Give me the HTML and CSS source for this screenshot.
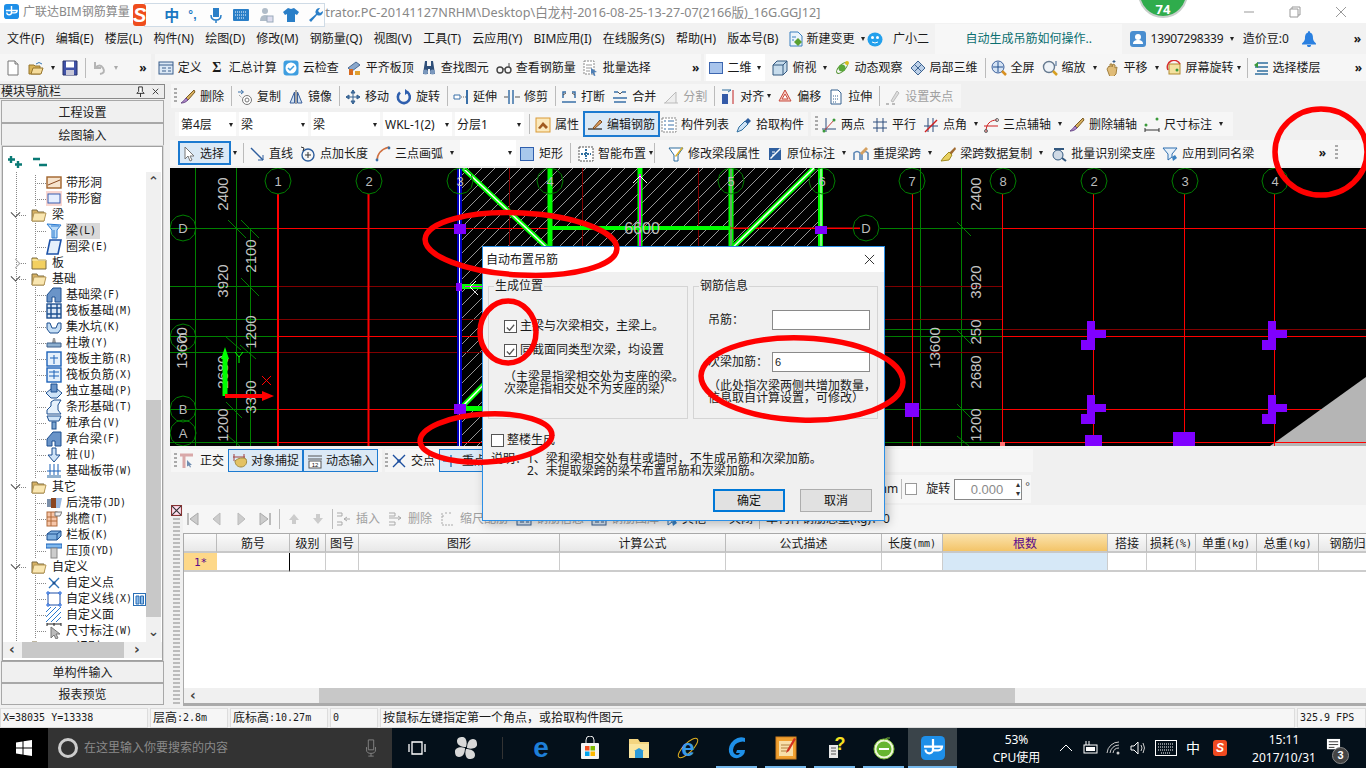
FILE: index.html
```html
<!DOCTYPE html>
<html lang="zh">
<head>
<meta charset="utf-8">
<title>广联达BIM钢筋算量</title>
<link rel="stylesheet" href="styles.css">
</head>
<body>
<svg class="defs" aria-hidden="true">
<defs>
<symbol id="doc" viewBox="0 0 16 16"><path d="M3 1h7l3 3v11H3z" fill="#fff" stroke="#777"/><path d="M10 1v3h3" fill="#ddd" stroke="#777"/></symbol>
<symbol id="open" viewBox="0 0 16 16"><path d="M1 5h5l1 1h5v8H1z" fill="#d9b45a" stroke="#96742a"/><path d="M3 14l2-6h10l-2 6z" fill="#f5dc9c" stroke="#96742a"/><path d="M8 4q3-3 6 0" stroke="#3577b5" fill="none"/></symbol>
<symbol id="save" viewBox="0 0 16 16"><path d="M1 1h14v14H1z" fill="#4052a8" stroke="#27306a"/><rect x="4" y="1.500" width="8" height="6" fill="#fff"/><rect x="4" y="10" width="8" height="5" fill="#c8c8d8"/></symbol>
<symbol id="undo" viewBox="0 0 16 16"><path d="M4 2v6h6M4 8q5-5 8 0t-3 6" fill="none" stroke="#b5b5b5" stroke-width="2"/></symbol>
<symbol id="def" viewBox="0 0 16 16"><rect x="1" y="2" width="14" height="12" fill="#dbe8f5" stroke="#3a5f8c"/><path d="M1 5h14M4 8h4M4 11h4M10 8h3M10 11h3" stroke="#3a5f8c"/></symbol>
<symbol id="cloud" viewBox="0 0 16 16"><rect x=".5" y=".5" width="15" height="15" rx="3" fill="#3e9ee0"/><circle cx="8" cy="8" r="5.500" fill="#fff"/><path d="M5 8l2 2 4-4" fill="none" stroke="#3e9ee0" stroke-width="1.500"/></symbol>
<symbol id="flat" viewBox="0 0 16 16"><path d="M2 8L10 2l4 3-8 6z" fill="#8aa8cc" stroke="#4a6a94"/><rect x="3" y="9" width="4" height="6" fill="#d86a1f"/><rect x="9" y="11" width="5" height="4" fill="#e0a030"/></symbol>
<symbol id="binoc" viewBox="0 0 16 16"><path d="M4 1h2v5h4V1h2l2 13H9V9H7v5H2z" fill="#30507a"/><circle cx="4.500" cy="12" r="2.500" fill="#7b98bd"/><circle cx="11.500" cy="12" r="2.500" fill="#7b98bd"/></symbol>
<symbol id="glass" viewBox="0 0 16 16"><circle cx="4" cy="10" r="3" fill="none" stroke="#444" stroke-width="1.400"/><circle cx="12" cy="10" r="3" fill="none" stroke="#444" stroke-width="1.400"/><path d="M7 9h2M13 7V3" stroke="#444"/></symbol>
<symbol id="batch" viewBox="0 0 16 16"><rect x="1" y="1" width="10" height="13" fill="#fff" stroke="#888" stroke-dasharray="2 1"/><path d="M3 5h6M3 8h6M3 11h4" stroke="#999"/><path d="M8 8l6 4-3 .5 1.500 3-1.500.5-1.500-3L8 14z" fill="#4f7fb5"/></symbol>
<symbol id="sq2d" viewBox="0 0 16 16"><rect x="1.500" y="2.500" width="13" height="11" fill="#a8c4ec" stroke="#3c66b0"/></symbol>
<symbol id="cube" viewBox="0 0 16 16"><path d="M1 5l4-4h10v10l-4 4H1z" fill="#c7dcec" stroke="#33587f"/><path d="M1 5h10v10M11 5l4-4" fill="none" stroke="#33587f"/></symbol>
<symbol id="orbit" viewBox="0 0 16 16"><ellipse cx="8" cy="8" rx="7" ry="3" transform="rotate(-45 8 8)" fill="none" stroke="#4f8f2f"/><circle cx="8" cy="8" r="3.500" fill="#5aa83a"/><circle cx="13" cy="3" r="2" fill="#d8c020"/></symbol>
<symbol id="part3d" viewBox="0 0 16 16"><path d="M1 8l7-7 7 7-7 7z" fill="#bcd0e8" stroke="#3d6391"/><path d="M4.500 4.500l7 7M11.500 4.500l-7 7" stroke="#3d6391"/></symbol>
<symbol id="zfull" viewBox="0 0 16 16"><circle cx="7" cy="7" r="6" fill="#d5e3f4" stroke="#3a5f9b"/><path d="M7 2v10M2 7h10" stroke="#23508f"/><path d="M11 11l4 4" stroke="#d89020" stroke-width="2.500"/></symbol>
<symbol id="zoomq" viewBox="0 0 16 16"><circle cx="7" cy="7" r="5.500" fill="#eef3f8" stroke="#667a90" stroke-width="1.400"/><path d="M11 11l4 4" stroke="#d8a020" stroke-width="2.500"/><path d="M14 1v5" stroke="#39608f"/></symbol>
<symbol id="hand" viewBox="0 0 16 16"><path d="M3 9l2-3 1 1V4l2 0v3l1-3 2 1v3l2-1-1 7-3 3H6z" fill="#e0bc78" stroke="#a28040"/><path d="M10 0v3M8.500 1.500h3" stroke="#3a5f8c"/></symbol>
<symbol id="rot" viewBox="0 0 16 16"><rect x="3" y="4" width="11" height="10" fill="#f4e2a0" stroke="#b08a30"/><path d="M2 10A6.500 6.500 0 0 1 14 4" fill="none" stroke="#d83030" stroke-width="1.500"/><circle cx="11" cy="10" r="1.500" fill="#3a9a3a"/></symbol>
<symbol id="floors" viewBox="0 0 16 16"><path d="M4 3h11M2 7h13M4 11h11M2 14h13" stroke="#2f6f9f" stroke-width="1.500"/><path d="M1 5l4-3v6z" fill="#3a9a3a"/></symbol>
<symbol id="erase" viewBox="0 0 16 16"><path d="M14 1L6 9l2 2 7-8z" fill="#d8b060" stroke="#7a5a20"/><path d="M1 14c2-1 3-3 5-5l2 2c-2 2-4 3-7 3z" fill="#b088c8" stroke="#6a4a8a"/></symbol>
<symbol id="copy" viewBox="0 0 16 16"><circle cx="10" cy="11" r="4.500" fill="#fff" stroke="#777"/><circle cx="10" cy="11" r="2" fill="none" stroke="#777"/><path d="M1 3h5M4 1l2.500 2L4 5" fill="none" stroke="#3a70a8"/><path d="M2 6l3 3" stroke="#888" stroke-dasharray="1 1"/></symbol>
<symbol id="mirror" viewBox="0 0 16 16"><path d="M8 1v14" stroke="#555"/><path d="M6.500 3v11H2zM9.500 3v11H14z" fill="#d3e3f3" stroke="#3a5f9b"/></symbol>
<symbol id="move" viewBox="0 0 16 16"><path d="M8 1v14M1 8h14M8 1l-2 3h4zM8 15l-2-3h4zM1 8l3-2v4zM15 8l-3-2v4z" fill="#5a86b8" stroke="#34608f"/></symbol>
<symbol id="rotate" viewBox="0 0 16 16"><path d="M4 3.500A6 6 0 1 0 11 3" fill="none" stroke="#2f5fae" stroke-width="2.600"/><path d="M9 0l4 3-4 3z" fill="#2f5fae"/></symbol>
<symbol id="extend" viewBox="0 0 16 16"><path d="M14 1v14" stroke="#3a70a8" stroke-width="2"/><path d="M1 6h6v4H1z" fill="#fff" stroke="#3a70a8"/><path d="M8 8h5" stroke="#666" stroke-dasharray="1 1"/></symbol>
<symbol id="trim" viewBox="0 0 16 16"><path d="M5 1v14M9 1v14" stroke="#3a70a8" stroke-width="1.500"/><path d="M0 8h4M11 8h5" stroke="#555"/></symbol>
<symbol id="brk" viewBox="0 0 16 16"><path d="M2 9V3h3M14 9V3h-3M1 13h14" stroke="#3a70a8" fill="none" stroke-width="1.500"/><path d="M2 6l3-2M11 4l3 2" stroke="#555"/></symbol>
<symbol id="merge" viewBox="0 0 16 16"><path d="M2 3h4M10 3h4M2 13h12M1 9h14" stroke="#3a70a8" stroke-width="1.400"/><path d="M6 3l2 2M10 3L8 5" stroke="#555"/></symbol>
<symbol id="split" viewBox="0 0 16 16"><path d="M1 14h14M2 14L13 3v11" fill="#eee" stroke="#bbb"/></symbol>
<symbol id="align" viewBox="0 0 16 16"><rect x="2" y="5" width="6" height="10" fill="#345aa8"/><path d="M13 1v14" stroke="#c02020"/><path d="M2 1h9M8 3l3-2" stroke="#2f6f9f"/></symbol>
<symbol id="offset" viewBox="0 0 16 16"><path d="M8 1l6 11H2z" fill="#f6cfc8" stroke="#c8483a"/><path d="M8 5l3 5H5z" fill="#fff" stroke="#c8483a"/></symbol>
<symbol id="stretch" viewBox="0 0 16 16"><path d="M3 1h7l3 3v11H3z" fill="#fff" stroke="#34608f"/><path d="M5 7h6M5 10h6M5 13h4" stroke="#34608f" stroke-dasharray="1 1"/></symbol>
<symbol id="clip" viewBox="0 0 16 16"><path d="M6 12l6-10 2 2-6 9z" fill="#ddd" stroke="#bbb"/><path d="M1 15h3M7 15h3" stroke="#bbb" stroke-width="2"/></symbol>
<symbol id="attr" viewBox="0 0 16 16"><rect x="1" y="1" width="14" height="14" fill="#fbe9bd" stroke="#d99a36"/><path d="M3 11l5-6 5 5-2 2-3-3-3 3z" fill="#a05a20"/></symbol>
<symbol id="edit" viewBox="0 0 16 16"><path d="M1 12h14" stroke="#444" stroke-width="1.500"/><path d="M6 11l7-8 2 2-8 7z" fill="#e0a060" stroke="#7a4a20"/></symbol>
<symbol id="list" viewBox="0 0 16 16"><rect x="1" y="1" width="14" height="14" fill="#fff" stroke="#888" stroke-dasharray="2 1"/><path d="M3 4h2M7 4h6M3 8h2M7 8h6M3 12h2M7 12h6" stroke="#3a70a8"/></symbol>
<symbol id="pick" viewBox="0 0 16 16"><path d="M1 15l2-5 6-6 3 3-6 6z" fill="#cfe2f5" stroke="#2f6f9f"/><path d="M9 4l3-3 3 3-3 3z" fill="#2f5f9f"/></symbol>
<symbol id="twopt" viewBox="0 0 16 16"><path d="M5 1v14M1 12h14" stroke="#2d4d7d"/><path d="M3 14L14 2" stroke="#c04040"/><circle cx="13" cy="3" r="1.500" fill="#3a9a3a"/><circle cx="3" cy="14" r="1.500" fill="#3a9a3a"/></symbol>
<symbol id="para" viewBox="0 0 16 16"><path d="M5 1v14M11 1v14M1 5h14M1 11h14" stroke="#2d4d7d"/></symbol>
<symbol id="angle" viewBox="0 0 16 16"><path d="M5 1v14M10 1v14M1 9h14" stroke="#2d4d7d"/><path d="M2 15L14 3" stroke="#d02020" stroke-width="1.400"/></symbol>
<symbol id="arc3" viewBox="0 0 16 16"><path d="M3 15C3 7 7 3 14 3" fill="none" stroke="#d02020"/><circle cx="3" cy="14" r="1.500" fill="none" stroke="#666"/><circle cx="14" cy="3" r="1.500" fill="none" stroke="#666"/><path d="M1 9h14" stroke="#d02020"/></symbol>
<symbol id="dim" viewBox="0 0 16 16"><path d="M1 11v4M15 11v4M1 13h14" stroke="#333"/><circle cx="13" cy="2" r="1.500" fill="#3a9a3a"/><circle cx="2" cy="8" r="1.500" fill="#3a9a3a"/></symbol>
<symbol id="sel" viewBox="0 0 16 16"><path d="M5 1v12l3-3 2 5 2-1-2-4h4z" fill="#fff" stroke="#777"/></symbol>
<symbol id="line" viewBox="0 0 16 16"><path d="M2 2l12 12" stroke="#2d5d9d" stroke-width="1.500"/><path d="M14 9v5H9" fill="none" stroke="#2d5d9d"/></symbol>
<symbol id="ptlen" viewBox="0 0 16 16"><circle cx="8" cy="9" r="6" fill="none" stroke="#2d5d9d" stroke-width="1.400"/><path d="M8 6v6M5 9h6" stroke="#333"/><path d="M1 1l3 1-1 3" fill="none" stroke="#333"/></symbol>
<symbol id="arc" viewBox="0 0 16 16"><path d="M2 15C2 8 7 3 14 1" fill="none" stroke="#d07040" stroke-width="1.500"/><circle cx="2" cy="14" r="1.400" fill="#3a70a8"/><circle cx="14" cy="2" r="1.400" fill="#3a70a8"/></symbol>
<symbol id="rect" viewBox="0 0 16 16"><rect x="1.500" y="1.500" width="13" height="13" fill="#a8c8ec" stroke="#2f5fae"/></symbol>
<symbol id="smart" viewBox="0 0 16 16"><rect x="1" y="1" width="14" height="14" fill="#fff" stroke="#555" stroke-dasharray="2 1"/><path d="M8 3v10M3 8h10" stroke="#2f6f9f" stroke-width="2" stroke-dasharray="2 1"/></symbol>
<symbol id="funnel" viewBox="0 0 16 16"><path d="M1 2h14l-5 7v6H6V9z" fill="#fff" stroke="#2d6d9d"/><path d="M7 10l7-9 1 1-7 9z" fill="#e0b020"/></symbol>
<symbol id="mark" viewBox="0 0 16 16"><path d="M2 2h12v12H2z" fill="#2f5f9f"/><path d="M3 12L13 2l1 1L4 13z" fill="#fff"/><path d="M5 6h3M5 9h2" stroke="#fff"/></symbol>
<symbol id="lift" viewBox="0 0 16 16"><path d="M1 14V7q3-3 6 0v7M9 14V7q3-3 6 0v7" fill="none" stroke="#5b86b5" stroke-width="1.600"/><path d="M7 7l6-6 2 2-6 6z" fill="#d4a060"/></symbol>
<symbol id="broom" viewBox="0 0 16 16"><path d="M15 1L9 7l2 2 5-6z" fill="#a06a30"/><path d="M9 6l3 3-3 5-8 1 3-4z" fill="#e8d060" stroke="#a08a20"/></symbol>
<symbol id="batch2" viewBox="0 0 16 16"><circle cx="7" cy="9" r="5" fill="#cfd9e5" stroke="#33587f"/><path d="M3 2h10v2H3z" fill="#33587f"/><path d="M11 12l4 3" stroke="#33587f" stroke-width="2"/></symbol>
<symbol id="apply" viewBox="0 0 16 16"><path d="M1 2h14l-5 6v3l-4 3V8z" fill="#e5f0fa" stroke="#2f6faf"/><path d="M10 11l3-2 2 3-4 3z" fill="#3a80c0"/></symbol>
<symbol id="ortho" viewBox="0 0 16 16"><path d="M1 2h13M5 2v13" stroke="#d9a8a8" stroke-width="3"/><path d="M8 7l5 5-2 0 1 2-1 .5-1-2-2 1z" fill="#6f8db0"/></symbol>
<symbol id="snap" viewBox="0 0 16 16"><path d="M2 1v7M12 1v7M1 4h12" stroke="#a04040"/><path d="M3 8c3-3 8-4 11-2 2 4-1 8-5 8-4 0-6-3-6-6z" fill="#e3c265" stroke="#a08a40"/></symbol>
<symbol id="dyn" viewBox="0 0 16 16"><path d="M1 3h14M1 6h14" stroke="#555"/><rect x="2" y="8" width="12" height="7" fill="#fff" stroke="#555"/><text x="8" y="14" font-size="6" text-anchor="middle" font-family="Liberation Sans" fill="#111">12</text></symbol>
<symbol id="cross" viewBox="0 0 16 16"><path d="M2 2l12 12M14 2L2 14" stroke="#1d4f9f" stroke-width="1.400"/><rect x="6.500" y="6.500" width="3" height="3" fill="#1d4f9f"/></symbol>
<symbol id="mid" viewBox="0 0 16 16"><path d="M0 8h16M8 2v12" stroke="#3a80c0" stroke-width="1.600"/></symbol>
<symbol id="first" viewBox="0 0 16 16"><path d="M3 2v12" stroke="#bbb" stroke-width="2"/><path d="M13 2v12L5 8z" fill="#ccc" stroke="#aaa"/></symbol>
<symbol id="prev" viewBox="0 0 16 16"><path d="M11 2v12L4 8z" fill="#ccc" stroke="#bbb"/></symbol>
<symbol id="next" viewBox="0 0 16 16"><path d="M5 2v12l7-6z" fill="#ccc" stroke="#bbb"/></symbol>
<symbol id="last" viewBox="0 0 16 16"><path d="M13 2v12" stroke="#bbb" stroke-width="2"/><path d="M3 2v12l8-6z" fill="#ccc" stroke="#aaa"/></symbol>
<symbol id="up" viewBox="0 0 16 16"><path d="M8 3l5 6H10v4H6V9H3z" fill="#ccc"/></symbol>
<symbol id="down" viewBox="0 0 16 16"><path d="M8 13l5-6H10V3H6v4H3z" fill="#ccc"/></symbol>
<symbol id="ins" viewBox="0 0 16 16"><path d="M1 2h5v3H1M1 11h5v3H1M8 8h6M8 8l3-2M8 8l3 2" fill="none" stroke="#aaa"/></symbol>
<symbol id="del" viewBox="0 0 16 16"><path d="M1 2h6v3H1M1 11h6v3H1M1 7h12M10 5l3 2-3 2" fill="none" stroke="#aaa"/></symbol>
<symbol id="scale" viewBox="0 0 16 16"><path d="M2 2v12h12M2 5h2M5 2h2M9 2h3" fill="none" stroke="#aaa" stroke-dasharray="2 1"/></symbol>
<symbol id="fopen" viewBox="0 0 16 16"><path d="M1 3h5l1 2h6v9H1z" fill="#d7b163" stroke="#7a6a40"/><path d="M3 6h12l-2 8H1z" fill="#f9e6b0" stroke="#b49656"/></symbol>
<symbol id="fclose" viewBox="0 0 16 16"><path d="M1 3h5l1 2h8v9H1z" fill="#f3d060" stroke="#7a6a40"/><path d="M1 5h14" stroke="#fff3c0"/></symbol>
<symbol id="tHole" viewBox="0 0 16 16"><rect x="1" y="2" width="14" height="11" fill="#f6e3cd" stroke="#a0622a" stroke-width="1.400"/><path d="M2 10L14 5" stroke="#8a4a20"/></symbol>
<symbol id="tWin" viewBox="0 0 16 16"><rect x="0" y="0" width="16" height="15" fill="#f9d6d0"/><rect x="2" y="3" width="12" height="9" fill="#e5eeff" stroke="#3a5fb0"/></symbol>
<symbol id="tBeam" viewBox="0 0 16 16"><path d="M1 1l14 1-4 5v8H6V7z" fill="#bcdcf8" stroke="#2a7ad0"/><path d="M5 3l8 0M8 7v8" stroke="#2a7ad0"/></symbol>
<symbol id="tRing" viewBox="0 0 16 16"><path d="M4 1h11l-3 14H1z" fill="#e5f0fb" stroke="#1d52a8" stroke-width="1.600"/></symbol>
<symbol id="tFb" viewBox="0 0 16 16"><path d="M1 15V8l6-7h8v14H9v-5H6v5z" fill="#6a94c8" stroke="#1d4f8f"/></symbol>
<symbol id="tRaft" viewBox="0 0 16 16"><rect x="1" y="1" width="14" height="14" fill="#dbe8f6" stroke="#1d4f8f" stroke-width="1.400"/><path d="M1 5h14M1 11h14M5 1v14M11 1v14" stroke="#1d4f8f" stroke-width="1.400"/></symbol>
<symbol id="tPit" viewBox="0 0 16 16"><path d="M1 4h3l2 5h4l2-5h3v6l-3 4H4l-3-4z" fill="#c5def5" stroke="#1d4f8f"/></symbol>
<symbol id="tPier" viewBox="0 0 16 16"><path d="M7 3h2l1 5H6z" fill="#999"/><path d="M1 8h14v4H1z" fill="#8fb0cf" stroke="#3a5f8c"/></symbol>
<symbol id="tPm" viewBox="0 0 16 16"><rect x="1" y="1" width="14" height="14" fill="#e5f0fb" stroke="#1d62b8" stroke-width="1.400"/><path d="M8 4v9M4 7h8" stroke="#1d62b8"/></symbol>
<symbol id="tPn" viewBox="0 0 16 16"><rect x="1" y="1" width="14" height="14" fill="#e5f0fb" stroke="#1d62b8" stroke-width="1.400"/><path d="M8 3v9M3 9h10M3 5h10" stroke="#1d62b8"/></symbol>
<symbol id="tIso" viewBox="0 0 16 16"><path d="M0 10l5-4h6l5 4-5 5H5z" fill="#cfe3f7" stroke="#1d4f8f"/><path d="M5 1h6v8H5z" fill="#6a94c8" stroke="#1d4f8f"/></symbol>
<symbol id="tStrip" viewBox="0 0 16 16"><path d="M1 15v-4l4-4V3l3-2h7l-3 5v5l3 4z" fill="#e5f0fb" stroke="#1d4f8f"/></symbol>
<symbol id="tCap" viewBox="0 0 16 16"><path d="M1 1h14l-2 5H3z" fill="#cfe3f7" stroke="#1d4f8f"/><rect x="6" y="7" width="4" height="7" fill="#7ea6d0" stroke="#1d4f8f"/></symbol>
<symbol id="tPile" viewBox="0 0 16 16"><path d="M6 1h4v7h4l-6 7-6-7h4z" fill="#cfe3f7" stroke="#1d4f8f"/></symbol>
<symbol id="tBand" viewBox="0 0 16 16"><path d="M1 8h14M4 1v12M12 1v12M8 1v12" stroke="#1d62b8"/><path d="M1 12h14v3H1z" fill="#8fb0cf"/></symbol>
<symbol id="tPost" viewBox="0 0 16 16"><rect x="1" y="4" width="4" height="8" fill="#7a8ea8"/><rect x="5" y="3" width="5" height="10" fill="#8a4520"/><path d="M10 3h6l-2 10h-4z" fill="#9ab8e0"/></symbol>
<symbol id="tEave" viewBox="0 0 16 16"><rect x="1" y="1" width="10" height="14" fill="#f7c6a8" stroke="#b06a3a"/><path d="M1 6h10M1 10h10M5 1v14" stroke="#b06a3a"/><path d="M9 1h7l-2 4H9z" fill="#eee" stroke="#777"/></symbol>
<symbol id="tRail" viewBox="0 0 16 16"><path d="M1 7l4-3h10v5l-4 4H1z" fill="#7fb0e0" stroke="#1d4f8f"/><path d="M1 7h10v6M11 7l4-3" fill="none" stroke="#1d4f8f"/></symbol>
<symbol id="tPress" viewBox="0 0 16 16"><rect x="0" y="1" width="16" height="4" fill="#7fb8ee" stroke="#1d62b8"/><rect x="5" y="5" width="6" height="10" fill="#ccc" stroke="#888"/></symbol>
<symbol id="tCpt" viewBox="0 0 16 16"><path d="M3 3l10 10M13 3L3 13" stroke="#2a6fb5" stroke-width="1.400"/><circle cx="8" cy="8" r="1.500" fill="#1d4f8f"/></symbol>
<symbol id="tCln" viewBox="0 0 16 16"><rect x="2" y="2" width="12" height="12" fill="none" stroke="#1d4fa8"/><path d="M1 1h2v2H1zM13 1h2v2h-2zM1 13h2v2H1zM13 13h2v2h-2z" fill="#fff" stroke="#1d62d8"/></symbol>
<symbol id="tCfc" viewBox="0 0 16 16"><path d="M0 5L5 0M0 10L10 0M0 15L15 0M5 15L15 5M10 15l5-5" stroke="#2a7ad0"/></symbol>
<symbol id="tDim" viewBox="0 0 16 16"><path d="M1 1h14M1 0v3M8 0v3M15 0v3" stroke="#222"/><path d="M5 4v11l3-3 2 4 2-1-2-4h4z" fill="#bbb" stroke="#777"/></symbol>
<symbol id="cols" viewBox="0 0 13 13"><rect x=".5" y=".5" width="12" height="12" fill="#fff" stroke="#2a6fb5"/><path d="M3 3h3v8H3zM7.500 3h3v8h-3z" fill="#8ebcea" stroke="#2a6fb5"/></symbol>
<symbol id="user" viewBox="0 0 16 16"><rect width="16" height="16" rx="3" fill="#4a8ed0"/><circle cx="8" cy="6" r="3" fill="#fff"/><path d="M3 13c0-3 2-4 5-4s5 1 5 4z" fill="#fff"/></symbol>
<symbol id="bell" viewBox="0 0 16 16"><path d="M8 0c1 0 1 1 1 1.500 3 1 3 4 3 6s2 4 3 5v1H1v-1c1-1 3-3 3-5s0-5 3-6C7 1 7 0 8 0z" fill="#2a80e0"/><path d="M6 14h4c0 3-4 3-4 0z" fill="#2a80e0"/></symbol>
<symbol id="newc" viewBox="0 0 16 16"><path d="M2 1h8l4 4v10H2z" fill="#eaf3fb" stroke="#3a80c0"/><path d="M4 9h2M4 6h4" stroke="#3a80c0"/><path d="M10 7l4 4-4 4-4-4z" fill="#5aa030"/></symbol>
<symbol id="gxe" viewBox="0 0 16 16"><ellipse cx="8" cy="8.500" rx="7.500" ry="7" fill="#23a0ec"/><circle cx="5.500" cy="6.500" r="1.500" fill="#fff"/><circle cx="10.500" cy="6.500" r="1.500" fill="#fff"/><path d="M5 11q3 2 6 0" fill="none" stroke="#fff"/></symbol>
<symbol id="plusT" viewBox="0 0 16 16"><path d="M3 2v7M0 5.500h7M10 7v7M7 10.500h7" stroke="#0a7a75" stroke-width="2.400"/></symbol>
<symbol id="minusT" viewBox="0 0 16 16"><path d="M1 5h7M7 11h8" stroke="#0a7a75" stroke-width="2.400"/></symbol>
<symbol id="appIcon" viewBox="0 0 16 16"><rect width="16" height="16" rx="3" fill="#1e8fe8"/><path d="M8 2v7a2.500 2.500 0 0 1-5 0M2 7h6M8 7h6a2.500 2.500 0 0 1-2.500 2.500H8" fill="none" stroke="#fff" stroke-width="1.500"/></symbol>
<polygon id="oct" points="13,0 11.300,6.500 6.500,11.300 0,13 -6.500,11.300 -11.300,6.500 -13,0 -11.300,-6.500 -6.500,-11.300 0,-13 6.500,-11.300 11.300,-6.500" fill="none" stroke="#008000"/>
<g id="pf"><path d="M1087 321h8v9h11v8h-11v12h-14v-10h6z" fill="#7f00ff"/></g>
<pattern id="hatch" patternUnits="userSpaceOnUse" width="13" height="13"><path d="M0 13L13 0M-2 2L2 -2M11 15L15 11" stroke="#bdbdbd" stroke-width=".8"/></pattern>
</defs>
</svg>

<div class="app">
  <header class="title">
    <svg class="i appi"><use href="#appIcon"/></svg>
    <span class="t1">广联达BIM钢筋算量</span>
    <span class="t2">istrator.PC-20141127NRHM\Desktop\白龙村-2016-08-25-13-27-07(2166版)_16G.GGJ12]</span>
    <span class="winbtns">
      <svg class="wb" viewBox="0 0 12 12"><path d="M1 6h10" stroke="#999"/></svg>
      <svg class="wb" viewBox="0 0 12 12"><path d="M1 3h8v8H1zM3 3V1h8v8H9" fill="none" stroke="#999"/></svg>
      <svg class="wb" viewBox="0 0 12 12"><path d="M1 1l10 10M11 1L1 11" stroke="#999"/></svg>
    </span>
  </header>

  <nav class="menu">
    <span>文件(F)</span><span>编辑(E)</span><span>楼层(L)</span><span>构件(N)</span><span>绘图(D)</span><span>修改(M)</span><span>钢筋量(Q)</span><span>视图(V)</span><span>工具(T)</span><span>云应用(Y)</span><span>BIM应用(I)</span><span>在线服务(S)</span><span>帮助(H)</span><span>版本号(B)</span>
    <span class="it newc"><svg class="i"><use href="#newc"/></svg>新建变更</span><i class="c mc1"></i>
    <span class="it gxe"><svg class="i"><use href="#gxe"/></svg>广小二</span>
    <span class="ask">自动生成吊筋如何操作..</span>
    <span class="it acct"><svg class="i"><use href="#user"/></svg>13907298339</span><i class="c mc2"></i>
    <span class="zjd">造价豆:0</span>
    <svg class="i bell"><use href="#bell"/></svg>
    <b class="more end">»</b>
  </nav>

  <div class="bar r1">
    <div class="grp g1">
      <svg class="i"><use href="#doc"/></svg>
      <svg class="i"><use href="#open"/></svg><i class="c"></i>
      <svg class="i"><use href="#save"/></svg><i class="s"></i>
      <svg class="i"><use href="#undo"/></svg><i class="c lt"></i>
      <b class="more end">»</b>
    </div>
    <div class="grp g2">
      <span class="it"><svg class="i"><use href="#def"/></svg>定义</span>
      <span class="it sg"><b class="sig">Σ</b>汇总计算</span>
      <span class="it"><svg class="i"><use href="#cloud"/></svg>云检查</span>
      <span class="it"><svg class="i"><use href="#flat"/></svg>平齐板顶</span>
      <span class="it"><svg class="i"><use href="#binoc"/></svg>查找图元</span>
      <span class="it"><svg class="i"><use href="#glass"/></svg>查看钢筋量</span>
      <span class="it"><svg class="i"><use href="#batch"/></svg>批量选择</span>
      <b class="more end">»</b>
    </div>
    <div class="grp g3">
      <span class="whitebox"><span class="it"><svg class="i"><use href="#sq2d"/></svg>二维</span><i class="c"></i></span>
      <span class="it"><svg class="i"><use href="#cube"/></svg>俯视</span><i class="c"></i>
      <span class="it"><svg class="i"><use href="#orbit"/></svg>动态观察</span>
      <span class="it"><svg class="i"><use href="#part3d"/></svg>局部三维</span><i class="s"></i>
      <span class="it"><svg class="i"><use href="#zfull"/></svg>全屏</span>
      <span class="it"><svg class="i"><use href="#zoomq"/></svg>缩放</span><i class="c"></i>
      <span class="it"><svg class="i"><use href="#hand"/></svg>平移</span><i class="c"></i>
      <span class="it"><svg class="i"><use href="#rot"/></svg>屏幕旋转</span><i class="c n"></i><i class="s"></i>
      <span class="it"><svg class="i"><use href="#floors"/></svg>选择楼层</span>
      <b class="more end">»</b>
    </div>
  </div>

  <main class="main">
    <aside class="nav">
      <div class="navhead"><span>模块导航栏</span><span class="navtools"><svg class="pin" viewBox="0 0 10 12"><path d="M3 1h4v5l2 2H1l2-2zM5 8v4" fill="#fff" stroke="#222"/></svg><svg class="pin" viewBox="0 0 10 12"><path d="M2 3l6 6M8 3L2 9" stroke="#333"/></svg></span></div>
      <button class="navbtn">工程设置</button>
      <button class="navbtn">绘图输入</button>
      <div class="treebox">
        <div class="treetool"><svg class="i"><use href="#plusT"/></svg><svg class="i"><use href="#minusT"/></svg></div>
        <div class="treemid">
          <ul class="tree">
            <li class="leaf"><svg class="i"><use href="#tHole"/></svg>带形洞</li>
            <li class="leaf"><svg class="i"><use href="#tWin"/></svg>带形窗</li>
            <li class="fold"><i class="ch"></i><svg class="i"><use href="#fopen"/></svg>梁</li>
            <li class="leaf cur"><svg class="i"><use href="#tBeam"/></svg><span class="curt">梁<em>(L)</em></span></li>
            <li class="leaf"><svg class="i"><use href="#tRing"/></svg>圈梁<em>(E)</em></li>
            <li class="fold"><i class="ch rt"></i><svg class="i"><use href="#fclose"/></svg>板</li>
            <li class="fold"><i class="ch"></i><svg class="i"><use href="#fopen"/></svg>基础</li>
            <li class="leaf"><svg class="i"><use href="#tFb"/></svg>基础梁<em>(F)</em></li>
            <li class="leaf"><svg class="i"><use href="#tRaft"/></svg>筏板基础<em>(M)</em></li>
            <li class="leaf"><svg class="i"><use href="#tPit"/></svg>集水坑<em>(K)</em></li>
            <li class="leaf"><svg class="i"><use href="#tPier"/></svg>柱墩<em>(Y)</em></li>
            <li class="leaf"><svg class="i"><use href="#tPm"/></svg>筏板主筋<em>(R)</em></li>
            <li class="leaf"><svg class="i"><use href="#tPn"/></svg>筏板负筋<em>(X)</em></li>
            <li class="leaf"><svg class="i"><use href="#tIso"/></svg>独立基础<em>(P)</em></li>
            <li class="leaf"><svg class="i"><use href="#tStrip"/></svg>条形基础<em>(T)</em></li>
            <li class="leaf"><svg class="i"><use href="#tCap"/></svg>桩承台<em>(V)</em></li>
            <li class="leaf"><svg class="i"><use href="#tFb"/></svg>承台梁<em>(F)</em></li>
            <li class="leaf"><svg class="i"><use href="#tPile"/></svg>桩<em>(U)</em></li>
            <li class="leaf"><svg class="i"><use href="#tBand"/></svg>基础板带<em>(W)</em></li>
            <li class="fold"><i class="ch"></i><svg class="i"><use href="#fopen"/></svg>其它</li>
            <li class="leaf"><svg class="i"><use href="#tPost"/></svg>后浇带<em>(JD)</em></li>
            <li class="leaf"><svg class="i"><use href="#tEave"/></svg>挑檐<em>(T)</em></li>
            <li class="leaf"><svg class="i"><use href="#tRail"/></svg>栏板<em>(K)</em></li>
            <li class="leaf"><svg class="i"><use href="#tPress"/></svg>压顶<em>(YD)</em></li>
            <li class="fold"><i class="ch"></i><svg class="i"><use href="#fopen"/></svg>自定义</li>
            <li class="leaf"><svg class="i"><use href="#tCpt"/></svg>自定义点</li>
            <li class="leaf"><svg class="i"><use href="#tCln"/></svg>自定义线<em>(X)</em><svg class="tag"><use href="#cols"/></svg></li>
            <li class="leaf"><svg class="i"><use href="#tCfc"/></svg>自定义面</li>
            <li class="leaf"><svg class="i"><use href="#tDim"/></svg>尺寸标注<em>(W)</em></li>
            <li class="fold"><i class="ch"></i><svg class="i"><use href="#fopen"/></svg>CAD识别</li>
          </ul>
          <div class="vbar"><span class="ar">⌃</span><div class="vtrack"><div class="vthumb"></div></div><span class="ar">⌄</span></div>
        </div>
        <div class="hbar"><span class="ar">‹</span><div class="hthumb"></div><span class="ar rgt">›</span></div>
      </div>
      <button class="navbtn low">单构件输入</button>
      <button class="navbtn low">报表预览</button>
    </aside>

    <section class="work">
      <div class="bar r2">
        <div class="grp g21">
          <i class="grip"></i>
          <span class="it"><svg class="i"><use href="#erase"/></svg>删除</span><i class="s"></i>
          <span class="it"><svg class="i"><use href="#copy"/></svg>复制</span>
          <span class="it"><svg class="i"><use href="#mirror"/></svg>镜像</span><i class="s"></i>
          <span class="it"><svg class="i"><use href="#move"/></svg>移动</span>
          <span class="it"><svg class="i"><use href="#rotate"/></svg>旋转</span><i class="s"></i>
          <span class="it"><svg class="i"><use href="#extend"/></svg>延伸</span>
          <span class="it"><svg class="i"><use href="#trim"/></svg>修剪</span><i class="s"></i>
          <span class="it"><svg class="i"><use href="#brk"/></svg>打断</span>
          <span class="it"><svg class="i"><use href="#merge"/></svg>合并</span>
          <span class="it off"><svg class="i"><use href="#split"/></svg>分割</span><i class="s"></i>
          <span class="it"><svg class="i"><use href="#align"/></svg>对齐</span><i class="c n"></i>
          <span class="it"><svg class="i"><use href="#offset"/></svg>偏移</span>
          <span class="it"><svg class="i"><use href="#stretch"/></svg>拉伸</span><i class="s"></i>
          <span class="it off"><svg class="i"><use href="#clip"/></svg>设置夹点</span>
        </div>
      </div>
      <div class="bar r3">
        <div class="grp g31">
          <span class="sel w57">第4层<i class="c"></i></span>
          <span class="sel">梁<i class="c"></i></span>
          <span class="sel">梁<i class="c"></i></span>
          <span class="sel clip">WKL-1(2)<i class="c"></i></span>
          <span class="sel">分层1<i class="c"></i></span>
          <i class="s"></i>
          <span class="it"><svg class="i"><use href="#attr"/></svg>属性</span>
          <span class="it on edit"><svg class="i"><use href="#edit"/></svg>编辑钢筋</span>
          <span class="it lst"><svg class="i"><use href="#list"/></svg>构件列表</span>
          <span class="it pk"><svg class="i"><use href="#pick"/></svg>拾取构件</span>
        </div>
        <div class="grp g32">
          <i class="grip"></i>
          <span class="it"><svg class="i"><use href="#twopt"/></svg>两点</span>
          <span class="it"><svg class="i"><use href="#para"/></svg>平行</span>
          <span class="it"><svg class="i"><use href="#angle"/></svg>点角</span><i class="c"></i>
          <span class="it ax3"><svg class="i"><use href="#arc3"/></svg>三点辅轴</span><i class="c"></i>
          <span class="it"><svg class="i"><use href="#erase"/></svg>删除辅轴</span>
          <span class="it"><svg class="i"><use href="#dim"/></svg>尺寸标注</span><i class="c"></i>
        </div>
      </div>
      <div class="bar r4">
        <div class="grp g41">
          <span class="it on pick"><svg class="i"><use href="#sel"/></svg>选择</span><i class="c n"></i><i class="s"></i>
          <span class="it"><svg class="i"><use href="#line"/></svg>直线</span>
          <span class="it"><svg class="i"><use href="#ptlen"/></svg>点加长度</span>
          <span class="it"><svg class="i"><use href="#arc"/></svg>三点画弧</span><i class="c"></i>
          <span class="blank"><i class="c"></i></span>
          <span class="it"><svg class="i"><use href="#rect"/></svg>矩形</span><i class="s"></i>
          <span class="it fwd2"><svg class="i"><use href="#smart"/></svg>智能布置</span><i class="c n"></i><i class="s n"></i>
          <span class="it fwd8"><svg class="i"><use href="#funnel"/></svg>修改梁段属性</span>
          <span class="it"><svg class="i"><use href="#mark"/></svg>原位标注</span><i class="c"></i>
          <span class="it"><svg class="i"><use href="#lift"/></svg>重提梁跨</span><i class="c"></i>
          <span class="it fwd1"><svg class="i"><use href="#broom"/></svg>梁跨数据复制</span><i class="c"></i>
          <span class="it fwd1"><svg class="i"><use href="#batch2"/></svg>批量识别梁支座</span>
          <span class="it"><svg class="i"><use href="#apply"/></svg>应用到同名梁</span>
          <b class="more end">»</b><i class="grip last"></i>
        </div>
      </div>

      <svg class="cad" viewBox="170 168 1196 278" aria-label="CAD canvas">
        <rect x="170" y="168" width="1196" height="278" fill="#000"/>
        <rect x="461" y="168" width="361" height="278" fill="url(#hatch)"/>
        <path d="M195.500 168V446M236.500 168V446M250.500 228V446M920.500 168V446M961.500 168V446" stroke="#008000"/>
        <path d="M170 228.500H277M170 286.500H277M170 319.500H277M170 336.500H277M170 352.500H277M170 409.500H277M170 442.500H277M880 228.500H1002M880 329.500H1002M880 336.500H1002M880 409.500H1002M880 442.500H1002" stroke="#008000"/>
        <path d="M228 220l18 18M225 336l16 14M226 402l16 16M228 436l12 10M241 220l18 18M241 278l18 18M240 345l16 14M957 222l14 14M957 330l14 14M957 404l14 14M957 436l12 10" stroke="#008000"/>
        <path d="M278 286.500H1002M278 319.500H1002M278 352.500H1002M1002 329.500H1366" stroke="#800000"/>
        <path d="M509.500 168V446M582.500 168V446M698.500 168V446" stroke="#800000"/>
        <path d="M278 228.500H860M278 336.500H880M278 409.500H880M278 442.500H880M1002 228.500H1366M1002 336.500H1366M1002 409.500H1366M1002 442.500H1366" stroke="#f00"/>
        <path d="M278 194V446M368.500 194V446" stroke="#f00" stroke-width="2"/>
        <path d="M912.500 194V446M1002.500 194V446M1093.500 194V446M1184.500 194V446M1274.500 194V446" stroke="#f00"/>
        <path d="M550 168V446M731 168V446M820.500 168V446" stroke="#0f0" stroke-width="5"/>
        <path d="M640 168V446" stroke="#0f0" stroke-width="5"/>
        <path d="M640 174V446" stroke="#f0f" stroke-width="2"/>
        <path d="M633 183l7-7 7 7" stroke="#fff" fill="none"/>
        <path d="M731 168V446" stroke="#d050d0" stroke-width="1"/>
        <path d="M821 168V446" stroke="#fff"/>
        <path d="M550 228H731" stroke="#0f0" stroke-width="4"/>
        <path d="M730 228H860" stroke="#f00"/>
        <path d="M463 168L560 260M814 168L720 260M459 410L500 368M460 408.500H500M460 286.500H482" stroke="#0f0" stroke-width="5"/>
        <path d="M463 168L560 260M814 168L720 260M459 410L500 368" stroke="#fff" stroke-width="1.500"/>
        <path d="M465 286.500H482" stroke="#f0f" stroke-width="1"/>
        <path d="M476 281l-6 6 8 8" stroke="#fff" fill="none"/>
        <path d="M459.500 168V446" stroke="#0000c0" stroke-width="5"/>
        <path d="M459.500 168V446" stroke="#fff"/>
        <g fill="#7f00ff">
          <rect x="454" y="224" width="12" height="10"/><rect x="456" y="283" width="6" height="8"/><rect x="454" y="404" width="12" height="10"/>
          <rect x="815" y="226" width="12" height="8"/><rect x="905" y="403" width="14" height="14"/>
          <rect x="1085" y="435" width="17" height="11"/><rect x="1173" y="432" width="22" height="14"/>
        </g>
        <use href="#pf"/><use href="#pf" y="74"/><use href="#pf" x="181"/><use href="#pf" x="181" y="74"/>
        <path d="M1270 446L1366 377V446z" fill="#b5b5b5"/>
        <path d="M1275 442.500H1366" stroke="#f00"/>
        <path d="M1274.500 430V446" stroke="#f00"/>
        <rect x="1000" y="442" width="5" height="4" fill="#ff7070"/>
        <g>
          <use href="#oct" x="278" y="181"/><use href="#oct" x="369" y="181"/><use href="#oct" x="460" y="181"/><use href="#oct" x="550" y="181"/>
          <use href="#oct" x="731" y="181"/><use href="#oct" x="822" y="181"/><use href="#oct" x="912" y="181"/><use href="#oct" x="1003" y="181"/>
          <use href="#oct" x="1094" y="181"/><use href="#oct" x="1185" y="181"/><use href="#oct" x="1275" y="181"/>
          <use href="#oct" x="183" y="228"/><use href="#oct" x="183" y="337"/><use href="#oct" x="183" y="409"/><use href="#oct" x="183" y="433"/><use href="#oct" x="866" y="228"/>
        </g>
        <g class="ax">
          <text x="278" y="186">1</text><text x="369" y="186">2</text><text x="460" y="186">3</text><text x="550" y="186">4</text>
          <text x="731" y="186">5</text><text x="822" y="186">6</text><text x="912" y="186">7</text><text x="1003" y="186">8</text>
          <text x="1094" y="186">2</text><text x="1185" y="186">3</text><text x="1275" y="186">4</text>
          <text x="183" y="233">D</text><text x="183" y="342">C</text><text x="183" y="414">B</text><text x="183" y="438">A</text><text x="866" y="233">D</text>
          <text x="642" y="234" class="lg">6600</text>
        </g>
        <g class="dm">
          <text transform="translate(228,194) rotate(-90)">2400</text>
          <text transform="translate(228,281) rotate(-90)">3920</text>
          <text transform="translate(228,372) rotate(-90)">2680</text>
          <text transform="translate(228,425) rotate(-90)">1200</text>
          <text transform="translate(256,256) rotate(-90)">2100</text>
          <text transform="translate(256,332) rotate(-90)">1200</text>
          <text transform="translate(256,397) rotate(-90)">3300</text>
          <text transform="translate(187,348) rotate(-90)">13600</text>
          <text transform="translate(981,194) rotate(-90)">2400</text>
          <text transform="translate(981,282) rotate(-90)">3920</text>
          <text transform="translate(981,332) rotate(-90)">250</text>
          <text transform="translate(981,372) rotate(-90)">2680</text>
          <text transform="translate(981,425) rotate(-90)">1200</text>
          <text transform="translate(940,348) rotate(-90)">13600</text>
        </g>
        <path d="M225 396V356" stroke="#0f0" stroke-width="5"/><path d="M225 347l-4 12h8z" fill="#0f0"/>
        <path d="M225 396H262" stroke="#f00" stroke-width="4"/><path d="M274 396l-12-5v10z" fill="#f00"/>
        <path d="M235 352l4 5 4-5M239 357v6" stroke="#0f0" fill="none"/>
        <path d="M262 376l9 9M271 376l-9 9" stroke="#f00"/>
      </svg>

      <div class="bar r5">
        <div class="grp g51">
          <i class="grip"></i>
          <span class="it"><svg class="i"><use href="#ortho"/></svg>正交</span>
          <span class="it on st"><svg class="i"><use href="#snap"/></svg>对象捕捉</span>
          <span class="it on st st2"><svg class="i"><use href="#dyn"/></svg>动态输入</span>
        </div>
        <div class="grp g52">
          <i class="grip"></i>
          <span class="it"><svg class="i"><use href="#cross"/></svg>交点</span>
          <span class="it on st"><svg class="i"><use href="#mid"/></svg>重点</span>
        </div>
      </div>
      <div class="bar r6">
        <div class="grp g61">
          <span>mm</span><i class="s"></i>
          <span class="cb sm"></span>
          <span class="lab">旋转</span>
          <span class="spin">0.000<span class="spinbtns"><i>▴</i><i>▾</i></span></span>
          <span class="deg">°</span>
        </div>
      </div>

      <div class="bottom">
        <div class="split"><svg class="xb" viewBox="0 0 10 10"><rect x=".5" y=".5" width="9" height="9" fill="#fde" stroke="#833"/><path d="M1 1l8 8M9 1L1 9" stroke="#333"/></svg><i class="dots"></i></div>
        <div class="gridcol">
          <div class="gtool">
            <svg class="i"><use href="#first"/></svg><svg class="i"><use href="#prev"/></svg><svg class="i"><use href="#next"/></svg><svg class="i"><use href="#last"/></svg><i class="s"></i>
            <svg class="i"><use href="#up"/></svg><svg class="i"><use href="#down"/></svg><i class="s"></i>
            <span class="it off w0"><svg class="i"><use href="#ins"/></svg>插入</span>
            <span class="it off"><svg class="i"><use href="#del"/></svg>删除</span>
            <span class="it off"><svg class="i"><use href="#scale"/></svg>缩尺配筋</span>
            <span class="it off"><svg class="i"><use href="#def"/></svg>钢筋信息</span>
            <span class="it off w1"><svg class="i"><use href="#def"/></svg>钢筋图库</span>
            <span class="it w2"><svg class="i"><use href="#apply"/></svg>其他</span>
            <span class="it w3">关闭</span><i class="s"></i>
            <span>单构件钢筋总重(kg)：0</span>
          </div>
          <div class="gridwrap">
            <div class="grid">
              <span class="gh"></span><span class="gh">筋号</span><span class="gh">级别</span><span class="gh">图号</span><span class="gh">图形</span><span class="gh">计算公式</span><span class="gh">公式描述</span><span class="gh">长度<em>(mm)</em></span><span class="gh act">根数</span><span class="gh">搭接</span><span class="gh">损耗<em>(%)</em></span><span class="gh">单重<em>(kg)</em></span><span class="gh">总重<em>(kg)</em></span><span class="gh">钢筋归类</span>
              <span class="gr">1*</span><span class="gc"></span><span class="gc curcell"></span><span class="gc"></span><span class="gc"></span><span class="gc"></span><span class="gc"></span><span class="gc"></span><span class="gc blue"></span><span class="gc"></span><span class="gc"></span><span class="gc"></span><span class="gc"></span><span class="gc"></span>
            </div>
            <div class="gspace"></div>
            <div class="ghbar"><span class="ar">‹</span><div class="ghthumb"></div></div>
          </div>
        </div>
      </div>
    </section>
  </main>

  <footer class="status">
    <span class="sb s1"><em>X=38035 Y=13338</em></span>
    <span class="sb s2">层高<em>:2.8m</em></span>
    <span class="sb s3">底标高<em>:10.27m</em></span>
    <span class="sb s4"><em>0</em></span>
    <span class="sb s5">按鼠标左键指定第一个角点，或拾取构件图元</span>
    <span class="sb s6"><em>325.9 FPS</em></span>
  </footer>

  <div class="taskbar">
    <span class="tstart"><svg class="tw" viewBox="0 0 16 16"><path d="M0 2.500l6.500-1v6H0zM7.500 1.300L16 0v7.500H7.500zM0 8.500h6.500v6L0 13.500zM7.500 8.500H16V16l-8.500-1.300z" fill="#fff"/></svg></span>
    <span class="tsearch"><i class="cort"></i><span class="stext">在这里输入你要搜索的内容</span><svg class="mic" viewBox="0 0 12 20"><path d="M3 1h6v11H3zM1 9v3q0 4 5 4t5-4V9M6 16v3M3 19h6" fill="none" stroke="#888"/></svg></span>
    <span class="tapps">
      <span class="ta"><svg class="ti" viewBox="0 0 24 24"><path d="M7 6h10v12H7zM4 8v8M20 8v8" fill="none" stroke="#fff" stroke-width="1.300"/></svg></span>
      <span class="ta"><svg class="ti" viewBox="0 0 24 24"><g fill="#d8d8d8"><path d="M12 11C7 11 3 9 3 5s4-4 6-4 5 4 3 10z"/><path d="M13 12C13 7 15 3 19 3s4 4 4 6-4 5-10 3z"/><path d="M12 13c5 0 9 2 9 6s-4 4-6 4-5-4-3-10z"/><path d="M11 12c0 5-2 9-6 9s-4-4-4-6 4-5 10-3z"/></g></svg></span>
      <i class="tsep"></i>
      <span class="ta"><svg class="ti" viewBox="0 0 24 24"><text x="12" y="21" class="edge">e</text></svg></span>
      <span class="ta"><svg class="ti" viewBox="0 0 24 24"><path d="M8 7V4a4 4 0 0 1 8 0v3" fill="none" stroke="#eee"/><rect x="3" y="7" width="18" height="16" rx="1" fill="#f5f5f5"/><rect x="7" y="10" width="4.500" height="4.500" fill="#f25022"/><rect x="12.500" y="10" width="4.500" height="4.500" fill="#7fba00"/><rect x="7" y="15.500" width="4.500" height="4.500" fill="#00a4ef"/><rect x="12.500" y="15.500" width="4.500" height="4.500" fill="#ffb900"/></svg></span>
      <span class="ta"><svg class="ti" viewBox="0 0 24 24"><path d="M2 3h9l2 3h9v16H2z" fill="#f4d580"/><path d="M2 8h20v14H2z" fill="#fbe6a0"/><path d="M8 15h8v7H8z" fill="#2d9ad8"/><path d="M7 15l5-3 5 3z" fill="#2d9ad8"/></svg></span>
      <span class="ta"><svg class="ti" viewBox="0 0 24 24"><ellipse cx="12" cy="12" rx="13" ry="4.500" transform="rotate(-45 12 12)" fill="none" stroke="#e0b020"/><text x="12" y="20" class="edge ie">e</text></svg></span>
      <span class="ta run"><svg class="ti" viewBox="0 0 24 24"><path d="M20 2q-6-2-11 2Q3 9 4 16q2 7 9 6 7-2 7-8h-8l-1 3h4q-1 2-3 2-4-1-4-5 1-7 7-8 3-1 5 0z" fill="#1e90e8"/></svg></span>
      <span class="ta run"><svg class="ti" viewBox="0 0 24 24"><rect x="2" y="1" width="20" height="22" fill="#f0a030" stroke="#d08020"/><rect x="5" y="5" width="14" height="15" fill="#f8dfaa"/><path d="M7 9h9M7 12h9M7 15h6" stroke="#b08040"/><path d="M20 2l-7 12-1 3 3-2 7-12z" fill="#d03020"/></svg></span>
      <span class="ta run"><svg class="ti" viewBox="0 0 24 24"><rect x="6" y="9" width="9" height="13" fill="#e8e8e8"/><path d="M8 12h5M8 15h5M8 18h5" stroke="#555"/><text x="17" y="14" class="qm">?</text></svg></span>
      <span class="ta run"><svg class="ti" viewBox="0 0 24 24"><ellipse cx="12" cy="13" rx="10" ry="10" fill="#eef6d8" stroke="#7cbb3a"/><circle cx="12" cy="13" r="7.500" fill="#67b530"/><path d="M7 13h10" stroke="#fff" stroke-width="2"/><path d="M12 4q3-3 6-2" stroke="#7cbb3a" fill="none"/></svg></span>
      <span class="ta run act"><svg class="ti" viewBox="0 0 16 16"><use href="#appIcon"/></svg></span>
    </span>
    <span class="tcpu"><span>53%</span><span>CPU使用</span></span>
    <span class="ttray">
      <svg class="tr" viewBox="0 0 16 16"><path d="M2 11l6-6 6 6" fill="none" stroke="#fff"/></svg>
      <svg class="tr" viewBox="0 0 16 16"><rect x="2" y="5" width="13" height="8" fill="none" stroke="#fff"/><rect x="4" y="7" width="9" height="4" fill="#fff"/><path d="M4 5V1M7 5V1" stroke="#fff"/></svg>
      <svg class="tr" viewBox="0 0 16 16"><path d="M1 13A12 12 0 0 1 13 2M4 13A9 9 0 0 1 13 5M7 13A6 6 0 0 1 13 8" fill="none" stroke="#ccc"/><circle cx="12" cy="13" r="1.500" fill="#ccc"/></svg>
      <svg class="tr" viewBox="0 0 16 16"><path d="M1 6h3l4-4v12l-4-4H1z" fill="none" stroke="#fff"/><path d="M11 5q2 3 0 6M13 3q3 5 0 10" fill="none" stroke="#ccc"/></svg>
      <svg class="trk" viewBox="0 0 22 16"><rect x=".5" y=".5" width="21" height="15" fill="none" stroke="#fff"/><path d="M3 4h16M3 7h16M3 10h16M6 13h10" stroke="#fff" stroke-dasharray="1 1"/></svg>
      <b class="tzh">中</b>
      <b class="ts">S</b>
    </span>
    <span class="tclock"><span>15:11</span><span>2017/10/31</span></span>
    <span class="tnote"><svg class="tnt" viewBox="0 0 16 16"><path d="M1 1h14v11H1z" fill="#fff"/><path d="M3 4h10M3 7h10M3 10h6" stroke="#333"/></svg><b class="badge">3</b></span>
  </div>
</div>

<div class="ime">
  <b class="imeS">S</b>
  <span class="imeb">
    <b class="zh">中</b><b class="pt">°,</b>
    <svg class="ii" viewBox="0 0 16 16"><path d="M5 1h6v9H5z" fill="#2a7fc8"/><path d="M3 8q0 5 5 5t5-5M8 13v3" fill="none" stroke="#2a7fc8" stroke-width="1.500"/></svg>
    <svg class="ii" viewBox="0 0 16 16"><rect y="2" width="16" height="12" rx="1" fill="#2a7fc8"/><path d="M2 5h12M2 8h12M4 11h8" stroke="#fff" stroke-dasharray="1 1"/></svg>
    <svg class="ii" viewBox="0 0 16 16"><circle cx="7" cy="4" r="3" fill="#b0bcc8"/><path d="M2 14q0-6 5-6t5 6z" fill="#b0bcc8"/><rect x="9" y="9" width="6" height="6" fill="#dde" stroke="#9ab"/></svg>
    <svg class="ii" viewBox="0 0 16 16"><path d="M5 1l3 1 3-1 5 4-2 3-2-1v8H4V7L2 8 0 5z" fill="#2a7fc8"/></svg>
    <svg class="ii" viewBox="0 0 16 16"><path d="M15 4a4 4 0 0 1-6 4L3 15 1 13l7-6a4 4 0 0 1 4-6L10 4l2 2z" fill="#2a7fc8"/></svg>
  </span>
</div>
<div class="badge74">74</div>

<div class="dlg" role="dialog">
  <div class="dtitle"><span>自动布置吊筋</span><svg class="dx" viewBox="0 0 12 12"><path d="M1 1l10 10M11 1L1 11" stroke="#222"/></svg></div>
  <div class="dbody">
    <div class="groups">
      <fieldset class="fs fsl">
        <legend>生成位置</legend>
        <label class="ck c1"><span class="cb"><svg viewBox="0 0 12 12"><path d="M2 6l3 3 5-6" fill="none" stroke="#555" stroke-width="1.300"/></svg></span>主梁与次梁相交，主梁上。</label>
        <label class="ck c2"><span class="cb"><svg viewBox="0 0 12 12"><path d="M2 6l3 3 5-6" fill="none" stroke="#555" stroke-width="1.300"/></svg></span>同截面同类型次梁，均设置</label>
        <p class="note nl">（主梁是指梁相交处为支座的梁。<br>次梁是指相交处不为支座的梁）</p>
      </fieldset>
      <fieldset class="fs fsr">
        <legend>钢筋信息</legend>
        <div class="fld f1"><span>吊筋：</span><span class="inp"></span></div>
        <div class="fld f2"><span>次梁加筋：</span><span class="inp">6</span></div>
        <p class="note nr">（此处指次梁两侧共增加数量，<br>信息取自计算设置，可修改）</p>
      </fieldset>
    </div>
    <label class="ck whole"><span class="cb"></span>整楼生成</label>
    <p class="desc">说明：1、梁和梁相交处有柱或墙时，不生成吊筋和次梁加筋。<br><span class="ind">2、未提取梁跨的梁不布置吊筋和次梁加筋。</span></p>
    <div class="dbtns"><button class="dbtn pri">确定</button><button class="dbtn">取消</button></div>
  </div>
</div>

<svg class="marks" viewBox="0 0 1366 768" aria-hidden="true">
  <g fill="none" stroke="#f00" stroke-width="5.500">
    <ellipse cx="521" cy="244" rx="96" ry="31" transform="rotate(3 521 244)"/>
    <ellipse cx="508" cy="332" rx="28" ry="31"/>
    <ellipse cx="486" cy="438" rx="66" ry="24" transform="rotate(-3 486 438)"/>
    <ellipse cx="802" cy="379" rx="101" ry="41" transform="rotate(2 802 379)"/>
    <ellipse cx="1321" cy="152" rx="46" ry="43"/>
  </g>
</svg>
</body>
</html>
```

FILE: styles.css
```css
*{box-sizing:border-box}
html,body{margin:0;padding:0}
body{width:1366px;height:768px;overflow:hidden;position:relative;background:#f0f0f0;color:#1a1a1a;font:12px/16px "Noto Sans","Noto Sans CJK SC",sans-serif}
.defs{position:absolute;width:0;height:0}
.app{display:flex;flex-direction:column;width:1366px;height:768px}
em{font:10px/16px "DejaVu Sans Mono",monospace;font-style:normal}
.i{width:16px;height:16px;flex:none;display:block}
.it{display:inline-flex;align-items:center;gap:4px;white-space:nowrap;flex:none}
.it.off{color:#a0a0a0}
.c{flex:none;width:0;height:0;border:2.500px solid transparent;border-top:4px solid #222;border-bottom:0;display:block}
.c.lt{border-top-color:#aaa}
.c.n{margin-left:-4px;margin-right:-1px}
.s{flex:none;width:1px;height:20px;background:#bbb;margin-right:-2px;display:block}
.s.n{margin-left:-5px}
.more{font-size:12px;line-height:12px;font-weight:700}
.end{margin-left:auto}
.grip{flex:none;width:3px;height:16px;background:repeating-linear-gradient(to bottom,#aaa 0 2px,transparent 2px 4px);display:block}

.title{height:23px;background:#fff;display:flex;align-items:center;color:#888;flex:none;padding-left:4px}
.appi{width:15px;height:15px}
.t1{margin-left:4px;width:293px;white-space:nowrap}
.t2{white-space:nowrap;font-size:12.650px}
.winbtns{margin-left:auto;display:flex;gap:34px;padding-right:19px}
.wb{width:12px;height:12px}

.menu{height:31px;flex:none;background:#f2f2f2;display:flex;align-items:center;gap:11.250px;padding:0 5px 0 7px;white-space:nowrap;position:relative}
.newc{gap:3px;margin-left:-2px}
.mc1{margin-left:-5px}
.gxe{gap:10px;margin-left:-9px}
.ask{width:187px;height:30px;background:#f7f7f7;color:#0b6f70;display:flex;align-items:center;justify-content:center;flex:none;margin-left:-5px}
.acct{margin-left:-4px;gap:5px;letter-spacing:-.250px}
.mc2{margin-left:-5px}
.zjd{margin-left:-2px}
.bell{margin-left:1px}

.bar{display:flex;flex:none;gap:3px}
.grp{display:flex;align-items:center;gap:7px;background:#f6f6f6;height:100%}
.r1{height:27px;margin-bottom:3px}
.g1{width:151px;padding:0 4px 0 5px}
.g2{margin-left:1px;width:548px;padding-right:2px;padding-left:3px}
.sg{margin-right:-1px}
.g3{width:663px;padding:0 4px 0 2px}
.sig{width:16px;text-align:center;font:700 14px/16px "Liberation Serif",serif}
.whitebox{background:#fff;height:100%;width:59px;display:flex;align-items:center;gap:6px;padding-left:2px}
.whitebox .it{gap:3px}
.r2 .it,.r3 .it,.r4 .it,.sel{padding-top:2px}

.main{display:flex;height:622px;flex:none}
.nav{width:165px;flex:none;display:flex;flex-direction:column;font-size:12px}
.navhead{height:15px;border:1px solid #888;border-width:1px 1px 1px 0;display:flex;align-items:center;justify-content:space-between;padding:0 3px 0 1px;line-height:12px;background:#ececec;flex:none;margin-bottom:1px}
.navtools{display:flex;gap:4px}
.pin{width:11px;height:11px}
.navbtn{height:23px;flex:none;font:inherit;font-size:12px;color:#222;background:#f0f0f0;border:1px solid #a8a8a8;border-radius:0;padding:2px 0 0;margin:0 0 0 1px;width:163px}
.navbtn.low{height:22px}
.treebox{height:515px;flex:none;margin-left:2px;width:161px;background:#fff;border:1px solid #a0a0a0;display:flex;flex-direction:column;outline:1px solid #d8d8d8}
.treetool{height:25px;flex:none;display:flex;align-items:center;gap:8px;padding-left:5px;padding-top:4px}
.treemid{flex:1;display:flex;min-height:0;padding-right:1px}
.tree{list-style:none;margin:0;padding:3px 0 0 0;flex:1;overflow:hidden;position:relative;background:repeating-linear-gradient(to bottom,#888 0 1px,transparent 1px 2px) 13px 0/1px 100% no-repeat}
.tree li{height:16px;display:flex;align-items:center;white-space:nowrap;gap:4px}
.tree li>em{margin-left:-4px}
.leaf{padding-left:43px;background-image:repeating-linear-gradient(to bottom,#888 0 1px,transparent 1px 2px),repeating-linear-gradient(to right,#888 0 1px,transparent 1px 2px);background-size:1px 100%,12px 1px;background-position:32px 0,32px 8px;background-repeat:no-repeat}
.curt{background:#d9d9d9;padding:0 5px 0 0;display:flex;width:34px}
.fold{padding-left:8px;background:repeating-linear-gradient(to right,#888 0 1px,transparent 1px 2px) 16px 8px/8px 1px no-repeat}
.fold .i{margin-left:6px}
.tree .fold{gap:5px}
.ch{width:7px;height:7px;border:solid #444;border-width:0 1.500px 1.500px 0;transform:rotate(45deg) translate(-2px,-2px);display:block;flex:none;margin:0 1px}
.ch.rt{border-color:#aaa;transform:rotate(-45deg)}
.tag{width:13px;height:13px;margin-left:-3px;flex:none}
.vbar{width:15px;flex:none;background:#f0f0f0;display:flex;flex-direction:column;align-items:stretch}
.vtrack{flex:1}
.vthumb{margin-top:208px;height:217px;background:#c8c8c8}
.ar{height:20px;text-align:center;font:700 13px/20px "DejaVu Sans",sans-serif;color:#444;display:block;flex:none}
.hbar{height:16px;flex:none;background:#f0f0f0;display:flex;align-items:stretch;margin-bottom:2px}
.hbar .ar,.ghbar .ar{height:16px;width:18px;line-height:14px;font-size:14px}
.hthumb{width:102px;background:#c8c8c8;margin-left:1px}
.rgt{margin-left:4px}

.work{margin-left:5px;width:1196px;flex:none;display:flex;flex-direction:column}
.r2{height:24px;margin-bottom:4px}
.g21{margin-left:1px;width:790px;padding-left:3px}
.g21 .grip{margin-right:-4px}
.r3{height:24px;margin-bottom:4px}
.g31{margin-left:5px;width:633px;gap:2px;padding-left:4px}
.sel{width:69px;height:100%;background:#fff;display:flex;align-items:center;justify-content:space-between;padding-left:2px;padding-right:3px;white-space:nowrap;overflow:hidden;flex:none;margin-right:1px}
.sel.w57{width:57px}
.sel .c{margin-left:auto}
.g31 .s{margin:0 3px 0 2px}
.g31 .it{margin-right:4px}
.g31 .edit{margin-right:0;margin-left:-1px}
.g31 .lst{margin-right:5px}
.on{background:#dbe9f6;outline:1px solid #1c7ad0;outline-offset:-1px}
.edit{height:24px;padding:2px 4px 0 3px;outline-width:2px}
.g32{width:422px;padding-left:4px}
.g32 .grip{margin-right:-4px}
.ax3{margin-left:-2px}
.r4{height:26px;margin-bottom:2px}
.g41{width:1196px;padding-left:9px}
.r4 .pick{height:22px;padding:2px 4px 0 1px;width:51px;gap:4px;outline-width:2px;margin-right:0}
.fwd1{margin-left:1px}
.fwd2{margin-left:2px}
.fwd8{margin-left:8px}
.blank{background:#fff;height:100%;width:56px;flex:none;display:flex;align-items:center;justify-content:flex-end;padding-right:4px;margin-left:-1px;margin-right:-4px}
.last{margin-left:2px;margin-right:28px}

.cad{width:1196px;height:278px;display:block;flex:none}
.ax text{font:13px "Liberation Sans",sans-serif;fill:#bdbdbd;text-anchor:middle}
.ax .lg{font-size:16px}
.dm text{font:15px "Liberation Sans",sans-serif;fill:#c4c4c4;text-anchor:middle}

.r5{height:23px;margin-top:3px;margin-bottom:3px}
.g51{margin-left:1px;width:211px;gap:0;padding-left:3px}
.g51 .grip{margin-right:2px}
.g51>.it:nth-child(2){margin-right:4px;gap:5px}
.st{height:23px;padding:0 4px;gap:3px;width:75px}
.g52{width:648px;padding-left:0}
.g52 .grip{margin-right:-4px}
.g52 .st{margin-left:-3px;width:70px}
.r6{height:28px;justify-content:flex-end;margin-right:335px}
.g61{background:#f7f7f7;width:170px;gap:3px;justify-content:flex-end;padding-right:1px}
.cb{display:block;flex:none;width:13px;height:13px;background:#fff;border:1px solid #555}
.cb.sm{border-color:#999;width:12px;height:12px}
.g61 .s{margin:0}
.lab{margin:0 0 0 6px;font-size:12px}
.spin{width:68px;height:21px;border:1px solid #888;background:#fff;color:#8a8a8a;display:flex;align-items:center;justify-content:flex-end;font:13px/19px "Liberation Sans",sans-serif;position:relative;padding-right:18px;margin-left:1px}
.spinbtns{position:absolute;right:1px;top:0;display:flex;flex-direction:column;font-size:8px;line-height:9px;color:#333}
.spinbtns i{font-style:normal}
.deg{font-size:11px;margin:-6px 0 0 0;color:#555}

.bottom{display:flex;height:201px;flex:none;margin-top:2px}
.split{width:13px;flex:none;display:flex;flex-direction:column;padding-left:1px;gap:2px}
.xb{width:11px;height:11px;flex:none}
.dots{display:block;flex:1;width:7px;margin-left:2px;background:repeating-linear-gradient(to bottom,#bbb 0 2px,transparent 2px 4px)}
.gridcol{flex:1;display:flex;flex-direction:column;min-width:0}
.gtool{height:28px;flex:none;background:#f6f6f6;display:flex;align-items:center;gap:8px;padding-left:2px;white-space:nowrap}
.gtool .s{margin:0 -2px}
.w0{margin-left:-3px}.w1{margin-left:-1px}.w2{margin-left:-5px}.w3{margin-left:15px}
.gridwrap{flex:1;background:#fff;border:1px solid #aaa;border-width:1px 0 3px 1px;display:flex;flex-direction:column;min-height:0}
.grid{display:grid;grid-template-columns:33px 73px 36px 33px 201px 166px 156px 61px 165px 39px 49px 61px 62px 70px;grid-template-rows:19px 19px;flex:none;overflow:hidden}
.gh{background:linear-gradient(#fafafa,#e8e8e8);border-right:1px solid #bbb;border-bottom:2px solid #c8c8c8;display:flex;align-items:center;justify-content:center;white-space:nowrap;overflow:hidden;padding-top:2px}
.gh.act{background:linear-gradient(#fbe3ae,#f3c468);color:#5a0a8a}
.gr{background:#fdd889;color:#5a0a8a;font:11px/19px "DejaVu Sans Mono",monospace;text-align:center;border-bottom:2px solid #ccc}
.gc{border-right:1px solid #ccc;border-bottom:2px solid #ccc}
.gc.blue{background:#d6e8f7}
.curcell{border-left:1px solid #000;margin-left:-1px}
.gspace{flex:1}
.ghbar{height:15px;flex:none;background:#f0f0f0;display:flex}
.ghthumb{margin-left:117px;width:696px;background:#c8c8c8}

.status{height:22px;flex:none;display:flex;gap:2px;padding-top:2px}
.sb{border:1px solid #ddd;background:#f6f6f6;height:20px;display:flex;align-items:center;padding-left:2px;white-space:nowrap;flex:none}
.s1{width:148px}.s2{width:78px}.s3{width:98px}.s4{width:48px}.s5{width:915px}.s6{width:69px}

.taskbar{height:40px;flex:none;background:#04101a;display:flex;align-items:stretch;color:#fff}
.tstart{width:48px;flex:none;background:#000;display:flex;align-items:center;justify-content:center}
.tw{width:16px;height:16px}
.tsearch{width:344px;flex:none;background:#333;display:flex;align-items:center;padding-left:10px;color:#8a8a8a}
.cort{width:20px;height:20px;border-radius:50%;border:3px solid #ccc;display:block;flex:none}
.stext{margin-left:6px;flex:1}
.mic{width:12px;height:18px;margin-right:15px}
.tapps{display:flex;width:565px;flex:none;align-items:stretch;position:relative}
.ta{width:49px;display:flex;align-items:center;justify-content:center;flex:none;position:relative}
.ti{width:24px;height:24px}
.ta.run::after{content:"";position:absolute;left:4px;right:4px;bottom:0;height:2px;background:#76b9ed}
.ta.act{background:#3a444a}
.ta.act::after{left:0;right:0}
.tsep{display:block;flex:none;width:1px;height:22px;background:#333;align-self:center;margin:0 13px 0 12px}
.edge{font:700 28px "Liberation Sans",sans-serif;fill:#1e7fd8;text-anchor:middle}
.ie{font-size:24px;fill:#3a9ae8}
.qm{font:700 18px "Liberation Sans",sans-serif;fill:#f5e020;text-anchor:middle}
.tcpu{width:81px;margin-left:19px;flex:none;display:flex;flex-direction:column;align-items:center;justify-content:center;gap:2px;line-height:16px;padding-top:1px}
.ttray{display:flex;align-items:center;flex:none;width:190px;padding-left:0;gap:6px}
.tr{width:18px;height:16px;flex:none}
.trk{width:22px;height:16px;margin-left:2px;flex:none}
.tzh{font-size:14px;font-weight:400;margin-left:3px}
.ts{width:14px;height:16px;background:#f04a20;border-radius:3px;font:italic 700 12px/16px "Liberation Sans",sans-serif;text-align:center;margin-left:7px}
.tclock{width:80px;flex:none;display:flex;flex-direction:column;align-items:center;justify-content:center;gap:2px;margin-left:-3px;padding-top:1px}
.tnote{flex:1;display:flex;align-items:center;padding-left:2px;position:relative}
.tnt{width:15px;height:15px;margin-top:-6px}
.badge{position:absolute;left:8px;top:19px;width:17px;height:17px;border-radius:50%;background:#444;border:1px solid #888;font:700 11px/15px "Liberation Sans",sans-serif;text-align:center}

.ime{position:absolute;left:131px;top:3px;width:184px;height:24px;display:flex;align-items:center}
.imeS{width:20px;height:22px;background:#ef4d1d;color:#fff;border-radius:3px;font:italic 700 20px/22px "Liberation Sans",sans-serif;text-align:center;position:relative;z-index:1;margin-left:2px}
.imeb{flex:1;height:24px;background:#fdfdfd;border:1px solid #cfdbe6;margin-left:-2px;display:flex;align-items:center;gap:9px;padding-left:19px}
.zh{color:#1a78c2;font-size:15px}
.pt{color:#1a78c2;font:700 12px/14px "Liberation Sans",sans-serif;width:11px}
.ii{width:16px;height:16px;flex:none}
.badge74{position:absolute;left:1138px;top:-32px;width:50px;height:50px;border-radius:50%;background:#2fac4c;border:2px solid #c8cfcb;color:#fff;font:700 13px/14px "Noto Sans",sans-serif;text-align:center;padding-top:32px}

.dlg{position:absolute;left:482px;top:246px;width:403px;height:275px;background:#f0f0f0;border:1px solid #2c8fe6;box-shadow:3px 3px 10px rgba(0,0,0,.25);display:flex;flex-direction:column}
.dtitle{height:25px;flex:none;background:#fff;display:flex;align-items:center;justify-content:space-between;padding:0 9px 0 3px;font-size:12px}
.dx{width:11px;height:11px}
.dbody{flex:1;padding:0 5px;display:flex;flex-direction:column}
.groups{display:flex;gap:5px;margin-top:8px;flex:none}
.fs{margin:0;padding:0;border:1px solid #d4d4d4;height:139px;min-width:0;position:relative}
.fs legend{padding:0 1px;font-size:12px;line-height:12px}
.fsl{width:200px;padding-left:15px}
.fsl legend{margin-left:-10px}
.fsr{width:185px;padding-left:14px}
.fsr legend{margin-left:-9px}
.ck{display:flex;align-items:center;gap:3px;white-space:nowrap;font-size:12px}
.c1{margin-top:26px;height:16px}
.c2{margin-top:8px;height:16px}
.note{margin:0;line-height:12px;font-size:12px;white-space:nowrap}
.nl{margin-top:13px}
.nr{margin-top:8px}
.fld{display:flex;align-items:center;justify-content:space-between;padding-right:7px;height:20px;white-space:nowrap}
.f1{margin-top:18px}
.f2{margin-top:22px}
.inp{width:98px;height:20px;background:#fff;border:1px solid #8a8a8a;padding-left:2px;font:11px/18px "Liberation Sans",sans-serif;display:block}
.whole{margin:14px 0 0 3px;gap:3px;height:14px}
.desc{margin:6px 0 0 3px;line-height:12px;white-space:nowrap}
.ind{padding-left:36px}
.dbtns{display:flex;justify-content:flex-end;gap:15px;padding-right:7px;margin-top:12px}
.dbtn{width:72px;height:23px;background:#e1e1e1;border:1px solid #adadad;font:inherit;font-size:12px;color:#111;padding:0;border-radius:0}
.dbtn.pri{border:2px solid #0078d7}

.marks{position:absolute;left:0;top:0;width:1366px;height:768px;pointer-events:none}
```
